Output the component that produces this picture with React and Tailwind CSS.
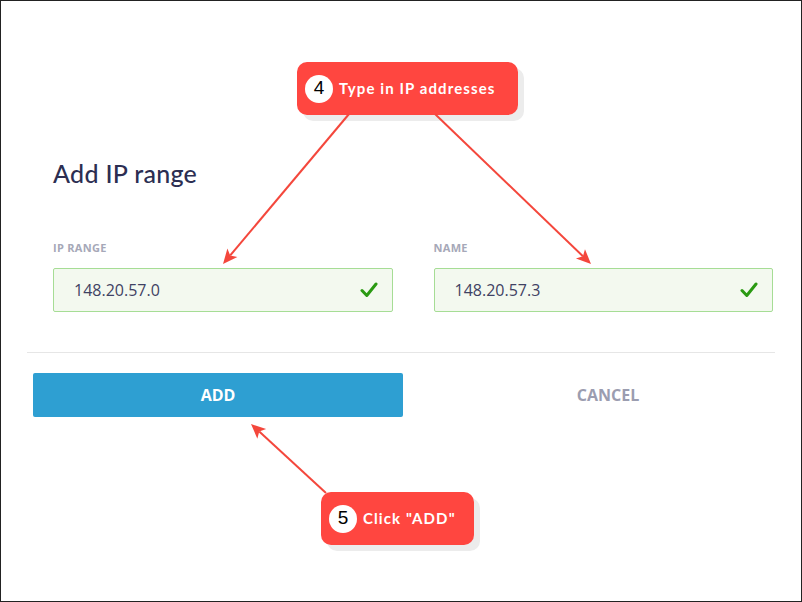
import React from 'react';

const Check = () => (
  <svg width="18" height="16" viewBox="0 0 18 16" fill="none">
    <path d="M2 8.5 L6.8 13.5 L16 2" stroke="#2a9a12" strokeWidth="3" strokeLinecap="round" strokeLinejoin="round" />
  </svg>
);

const Field = ({ label, value }) => (
  <div>
    <div className="text-[11px] font-bold tracking-[0.3px] text-[#a6a8b8] mb-[13px] leading-[14px]" style={{ fontFamily: '"Open Sans", sans-serif' }}>
      {label}
    </div>
    <div className="h-[44px] flex items-center justify-between bg-[#f3f9ef] border border-[#a6dd95] rounded-[2px] pl-[20px] pr-[14px]">
      <span className="text-[16px] text-[#3f4263]" style={{ fontFamily: '"Open Sans", sans-serif' }}>{value}</span>
      <Check />
    </div>
  </div>
);

const Callout = ({ n, text, className }) => (
  <div className={`absolute ${className}`}>
    <div className="absolute inset-0 translate-x-[6px] translate-y-[6px] rounded-[10px] bg-[#ececec]"></div>
    <div className="relative h-full flex items-center gap-[6px] pl-[8px] pr-[12px] rounded-[10px] bg-[#ff4640]">
      <div className="w-[28px] h-[28px] rounded-full bg-white flex items-center justify-center text-black text-[19px]" style={{ fontFamily: '"Liberation Sans", sans-serif' }}>
        {n}
      </div>
      <span className="text-white text-[15px] font-bold tracking-[1.1px] whitespace-nowrap" style={{ fontFamily: 'Lato, sans-serif' }}>{text}</span>
    </div>
  </div>
);

const Arrow = ({ x1, y1, x2, y2 }) => {
  const a = Math.atan2(y2 - y1, x2 - x1);
  const len = 16, w = 0.42;
  const p1 = [x2 - len * Math.cos(a - w), y2 - len * Math.sin(a - w)];
  const p2 = [x2 - len * Math.cos(a + w), y2 - len * Math.sin(a + w)];
  const m = [x2 - len * 0.7 * Math.cos(a), y2 - len * 0.7 * Math.sin(a)];
  return (
    <g>
      <line x1={x1} y1={y1} x2={m[0]} y2={m[1]} stroke="#f4473c" strokeWidth="2" />
      <polygon points={`${x2},${y2} ${p1[0]},${p1[1]} ${m[0]},${m[1]} ${p2[0]},${p2[1]}`} fill="#f4473c" />
    </g>
  );
};

export default function App() {
  return (
    <div className="relative w-[802px] h-[602px] bg-white border border-[#222] overflow-hidden">
      {/* Dialog */}
      <div className="pt-[156px]">
        <h1 className="px-[52px] text-[25px] font-medium tracking-[0.3px] text-[#2c2e52] leading-[32px]" style={{ fontFamily: 'Lato, sans-serif' }}>
          Add IP range
        </h1>
        <div className="pl-[52px] pr-[28px] mt-[52px] grid grid-cols-2 gap-[41px]">
          <Field label="IP RANGE" value="148.20.57.0" />
          <Field label="NAME" value="148.20.57.3" />
        </div>
        <div className="mx-[26px] mt-[40px] border-t border-[#e6e6e6]"></div>
        <div className="px-[32px] mt-[20px] flex">
          <button className="shrink-0 w-[370px] h-[44px] bg-[#2e9fd2] rounded-[2px] text-white text-[16px] font-bold" style={{ fontFamily: '"Open Sans", sans-serif' }}>
            ADD
          </button>
          <button className="shrink-0 ml-[35px] w-[340px] h-[44px] text-[#9b9db0] text-[16px] font-bold" style={{ fontFamily: '"Open Sans", sans-serif' }}>
            CANCEL
          </button>
        </div>
      </div>

      {/* Annotations */}
      <Callout n="4" text="Type in IP addresses" className="left-[296px] top-[61px] w-[221px] h-[53px]" />
      <Callout n="5" text={'Click "ADD"'} className="left-[320px] top-[491px] w-[153px] h-[53px]" />
      <svg className="absolute inset-0 pointer-events-none" width="802" height="602">
        <Arrow x1={348} y1={113} x2={222} y2={263} />
        <Arrow x1={434} y1={113} x2={590} y2={263} />
        <Arrow x1={325} y1={492} x2={250} y2={423} />
      </svg>
    </div>
  );
}
